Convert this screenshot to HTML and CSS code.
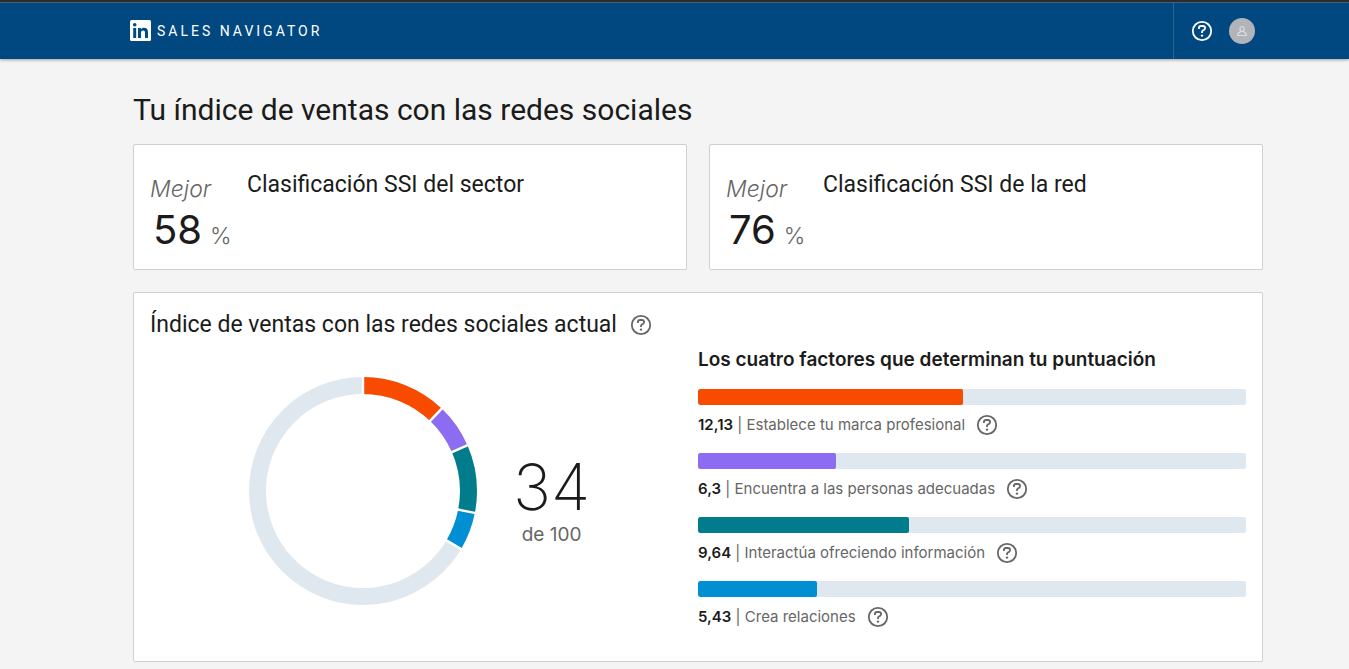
FILE: index.html
```html
<!DOCTYPE html>
<html lang="es">
<head>
<meta charset="utf-8">
<meta name="viewport" content="width=device-width, initial-scale=1">
<title>Sales Navigator</title>
<link rel="stylesheet" href="styles.css">
</head>
<body>
<svg class="sprite" aria-hidden="true">
  <symbol id="help" viewBox="0 0 24 24">
    <circle cx="12" cy="12" r="9.2" fill="none" stroke="currentColor" stroke-width="1.8"/>
    <path d="M8.9 9.9V9.2C8.9 7.8 9.8 7 11.1 7H12.9C14.2 7 15.1 7.8 15.1 9C15.1 9.9 14.7 10.5 13.9 11L12.9 11.6C12.3 12 12 12.4 12 13V14" fill="none" stroke="currentColor" stroke-width="1.8"/>
    <circle cx="12" cy="16.6" r="1.2" fill="currentColor"/>
  </symbol>
</svg>
<header class="topbar">
  <a class="brand" href="#">
    <svg class="brand-logo" viewBox="0 0 21 21" aria-hidden="true">
      <rect width="21" height="21" rx="1.5" fill="#fff"/>
      <circle cx="4.7" cy="4.7" r="1.8" fill="#004b7f"/>
      <path d="M3.2 8H6.2V18H3.2ZM8 8H10.9V9.4C11.5 8.4 12.6 7.8 13.9 7.8C16.9 7.8 18 9.6 18 12.4V18H15V13C15 11.5 14.7 10.4 13.2 10.4C11.6 10.4 11 11.5 11 13V18H8Z" fill="#004b7f"/>
    </svg>
    <span>SALES NAVIGATOR</span>
  </a>
  <div class="tools">
    <button class="icon-button" type="button" aria-label="Ayuda"><svg class="icon"><use href="#help"/></svg></button>
    <button class="avatar" type="button" aria-label="Perfil">
      <svg viewBox="0 0 26 26" aria-hidden="true"><g fill="none" stroke="#dcdee0" stroke-width="1.2"><path d="M11 10.5A2 2 0 0 1 15 10.5V11.5A2 2 0 0 1 11 11.5Z"/><path d="M11.3 13.7L9.3 15.2C8.8 15.6 8.7 16 8.7 16.5V17.5H17.3V16.5C17.3 16 17.2 15.6 16.7 15.2L14.7 13.7"/></g></svg>
    </button>
  </div>
</header>
<main class="page">
  <h1>Tu índice de ventas con las redes sociales</h1>
  <div class="ranks">
    <section class="card rank">
      <div class="rank-figure"><em>Mejor</em><p><strong>58</strong><span>%</span></p></div>
      <h2>Clasificación SSI del sector</h2>
    </section>
    <section class="card rank">
      <div class="rank-figure"><em>Mejor</em><p><strong>76</strong><span>%</span></p></div>
      <h2>Clasificación SSI de la red</h2>
    </section>
  </div>
  <section class="card current">
    <div class="index">
      <div class="index-title"><h2>Índice de ventas con las redes sociales actual</h2><button class="icon-button" type="button" aria-label="Más información sobre el índice"><svg class="icon"><use href="#help"/></svg></button></div>
      <div class="score">
        <svg class="donut" viewBox="0 0 228 228" role="img" aria-label="34 de 100">
          <g fill="none" stroke-width="17" transform="rotate(-90 114 114)">
            <circle cx="114" cy="114" r="105.5" stroke="#e0e8ef"/>
            <circle cx="114" cy="114" r="105.5" stroke="#f84b00" pathLength="100" stroke-dasharray="12.13 100"/>
            <circle cx="114" cy="114" r="105.5" stroke="#8c6cf1" pathLength="100" stroke-dasharray="6.3 100" stroke-dashoffset="-12.13"/>
            <circle cx="114" cy="114" r="105.5" stroke="#007c8c" pathLength="100" stroke-dasharray="9.64 100" stroke-dashoffset="-18.43"/>
            <circle cx="114" cy="114" r="105.5" stroke="#008fd3" pathLength="100" stroke-dasharray="5.43 100" stroke-dashoffset="-28.07"/>
          </g>
          <g stroke="#fff" stroke-width="2.5">
            <path d="M114 -1V20"/>
            <path d="M114 -1V20" transform="rotate(43.7 114 114)"/>
            <path d="M114 -1V20" transform="rotate(66.4 114 114)"/>
            <path d="M114 -1V20" transform="rotate(101.1 114 114)"/>
            <path d="M114 -1V20" transform="rotate(120.6 114 114)"/>
          </g>
        </svg>
        <p class="total"><strong>34</strong><span>de 100</span></p>
      </div>
    </div>
    <div class="factors">
      <h3>Los cuatro factores que determinan tu puntuación</h3>
      <ul>
        <li><div class="track"><div class="fill orange" style="width:48.4%"></div></div><div class="label"><span><b>12,13</b> | Establece tu marca profesional</span><button class="icon-button" type="button" aria-label="Más información"><svg class="icon"><use href="#help"/></svg></button></div></li>
        <li><div class="track"><div class="fill purple" style="width:25.2%"></div></div><div class="label"><span><b>6,3</b> | Encuentra a las personas adecuadas</span><button class="icon-button" type="button" aria-label="Más información"><svg class="icon"><use href="#help"/></svg></button></div></li>
        <li><div class="track"><div class="fill teal" style="width:38.56%"></div></div><div class="label"><span><b>9,64</b> | Interactúa ofreciendo información</span><button class="icon-button" type="button" aria-label="Más información"><svg class="icon"><use href="#help"/></svg></button></div></li>
        <li><div class="track"><div class="fill blue" style="width:21.72%"></div></div><div class="label"><span><b>5,43</b> | Crea relaciones</span><button class="icon-button" type="button" aria-label="Más información"><svg class="icon"><use href="#help"/></svg></button></div></li>
      </ul>
    </div>
  </section>
</main>
</body>
</html>
```
FILE: styles.css
```css
* { box-sizing: border-box; }
body {
  margin: 0;
  background: #f4f4f4;
  color: #1b1b1b;
  font-family: Inter, "Liberation Sans", sans-serif;
}
h1, h2, h3, p, ul { margin: 0; padding: 0; font-weight: 400; }
h1, h2, .brand { font-family: Roboto, "Liberation Sans", sans-serif; }
ul { list-style: none; }
button { padding: 0; border: 0; background: none; color: inherit; cursor: pointer; }
.sprite { display: none; }
.icon { display: block; width: 24px; height: 24px; }
.icon-button { flex: none; width: 24px; height: 24px; color: #666; }

.topbar {
  display: flex;
  align-items: stretch;
  justify-content: space-between;
  height: 59px;
  padding: 0 94px 0 130px;
  border-top: 2px solid #2b2b2b;
  background: #00487f;
  box-shadow: inset 0 1px #46627a, 0 1px 3px rgba(0, 0, 0, .35);
  color: #fff;
}
.brand {
  display: flex;
  align-items: center;
  gap: 6px;
  color: #fff;
  text-decoration: none;
  font-size: 14px;
  letter-spacing: 3px;
}
.brand-logo { width: 21px; height: 21px; }
.tools {
  display: flex;
  align-items: center;
  gap: 15px;
  padding-left: 16px;
  border-left: 1px solid #2c6690;
}
.tools .icon-button { color: #fff; }
.avatar { width: 26px; height: 26px; border-radius: 50%; background: #b1b4b8; }
.avatar svg { display: block; }

.page { padding: 31px 86px 8px 133px; }
h1 { margin-bottom: 14px; font-size: 30px; line-height: 40px; }
h2 { font-size: 23px; line-height: 32px; }
.card { border: 1px solid #cfcfcf; border-radius: 2px; background: #fff; }

.ranks { display: grid; grid-template-columns: 1fr 1fr; gap: 22px; margin-bottom: 22px; }
.rank { display: flex; padding: 24px 16px 8px; }
.rank-figure { flex: none; width: 97px; padding-top: 4px; color: #666; }
.rank-figure em { display: block; font-size: 23px; line-height: 32px; font-weight: 300; }
.rank-figure p { display: flex; align-items: baseline; gap: 8px; padding-left: 3px; line-height: 50px; font-size: 23px; font-weight: 300; }
.rank-figure strong { color: #1b1b1b; font-size: 40px; font-weight: 400; }

.current { display: grid; grid-template-columns: 1fr 1fr; padding: 16px 16px 32px; }
.index-title { display: flex; align-items: center; gap: 12px; }
.score { display: flex; align-items: center; gap: 36px; padding: 36px 0 0 99px; }
.donut { flex: none; width: 228px; height: 228px; }
.total { display: flex; flex-direction: column; align-items: center; padding-top: 16px; }
.total strong { font-size: 64px; line-height: 72px; font-weight: 200; }
.total span { color: #666; font-size: 19px; line-height: 24px; }

.factors { padding-top: 37px; }
.factors h3 { margin-bottom: 15px; font-size: 19px; line-height: 28px; font-weight: 600; }
.factors ul { display: flex; flex-direction: column; gap: 16px; }
.track { height: 16px; margin-bottom: 8px; overflow: hidden; border-radius: 2px; background: #e0e8ef; }
.fill { height: 100%; border-radius: 2px; }
.orange { background: #f84b00; }
.purple { background: #8c6cf1; }
.teal { background: #007c8c; }
.blue { background: #008fd3; }
.label { display: flex; align-items: center; gap: 10px; color: #666; font-size: 15px; line-height: 24px; }
.label b { color: #1b1b1b; font-weight: 600; }
```
